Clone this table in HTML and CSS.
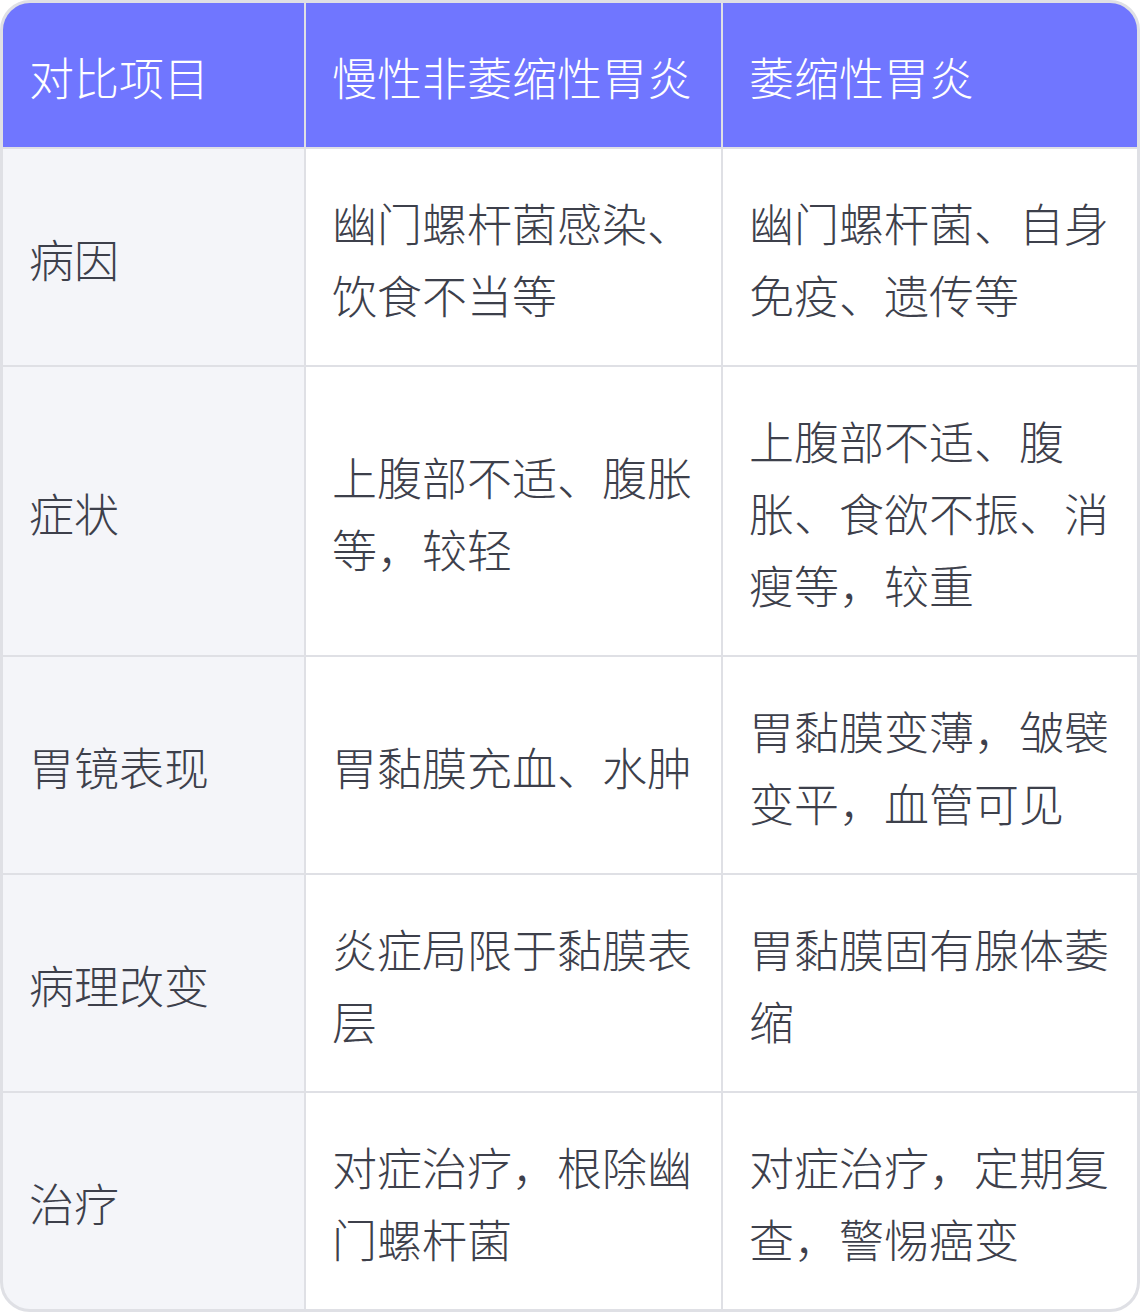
FILE: index.html
```html
<!DOCTYPE html>
<html lang="zh-CN">
<head>
<meta charset="utf-8">
<link rel="stylesheet" href="styles.css">
</head>
<body>
<div class="table">
  <div class="cell head">对比项目</div>
  <div class="cell head">慢性非萎缩性胃炎</div>
  <div class="cell head">萎缩性胃炎</div>

  <div class="cell label">病因</div>
  <div class="cell">幽门螺杆菌感染、饮食不当等</div>
  <div class="cell">幽门螺杆菌、自身免疫、遗传等</div>

  <div class="cell label">症状</div>
  <div class="cell">上腹部不适、腹胀等，较轻</div>
  <div class="cell">上腹部不适、腹胀、食欲不振、消瘦等，较重</div>

  <div class="cell label">胃镜表现</div>
  <div class="cell">胃黏膜充血、水肿</div>
  <div class="cell">胃黏膜变薄，皱襞变平，血管可见</div>

  <div class="cell label">病理改变</div>
  <div class="cell">炎症局限于黏膜表层</div>
  <div class="cell">胃黏膜固有腺体萎缩</div>

  <div class="cell label">治疗</div>
  <div class="cell">对症治疗，根除幽门螺杆菌</div>
  <div class="cell">对症治疗，定期复查，警惕癌变</div>
</div>
</body>
</html>
```
FILE: styles.css
```css
html, body {
  margin: 0;
  padding: 0;
  background: #ffffff;
}
body {
  font-family: "Noto Sans CJK SC", "Noto Sans", sans-serif;
  font-weight: 300;
}
.table {
  width: 1140px;
  box-sizing: border-box;
  border: 3px solid #dfe0e5;
  border-radius: 30px;
  overflow: hidden;
  display: grid;
  grid-template-columns: 301px 415px 414px;
  column-gap: 2px;
  row-gap: 2px;
  background: #dfe0e5;
}
.cell {
  background: #ffffff;
  color: #3d404b;
  font-size: 45px;
  line-height: 72px;
  padding: 38px 20px 34px 26px;
  display: flex;
  align-items: center;
}
.head {
  background: #7076ff;
  color: #ffffff;
}
.label {
  background: #f4f5f9;
}
```
